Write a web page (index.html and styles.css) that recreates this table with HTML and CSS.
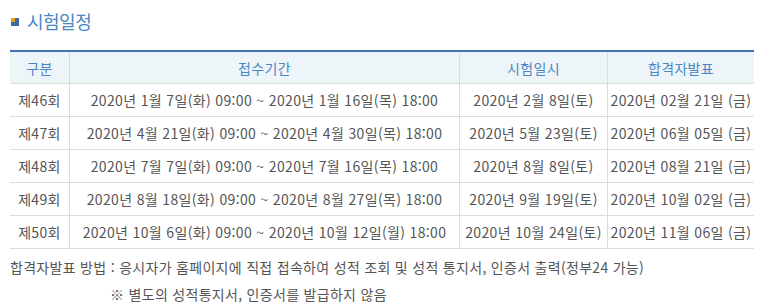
FILE: index.html
```html
<!DOCTYPE html>
<html lang="ko">
<head>
<meta charset="utf-8">
<link rel="stylesheet" href="styles.css">
</head>
<body>
<div class="wrap">
  <h2 class="title"><span class="bullet"><span class="corner"></span></span>시험일정</h2>
  <table class="sched">
    <thead>
      <tr><th class="c1">구분</th><th class="c2">접수기간</th><th class="c3">시험일시</th><th class="c4">합격자발표</th></tr>
    </thead>
    <tbody>
      <tr><td>제46회</td><td>2020년 1월 7일(화) 09:00 ~ 2020년 1월 16일(목) 18:00</td><td>2020년 2월 8일(토)</td><td>2020년 02월 21일 (금)</td></tr>
      <tr><td>제47회</td><td>2020년 4월 21일(화) 09:00 ~ 2020년 4월 30일(목) 18:00</td><td>2020년 5월 23일(토)</td><td>2020년 06월 05일 (금)</td></tr>
      <tr><td>제48회</td><td>2020년 7월 7일(화) 09:00 ~ 2020년 7월 16일(목) 18:00</td><td>2020년 8월 8일(토)</td><td>2020년 08월 21일 (금)</td></tr>
      <tr><td>제49회</td><td>2020년 8월 18일(화) 09:00 ~ 2020년 8월 27일(목) 18:00</td><td>2020년 9월 19일(토)</td><td>2020년 10월 02일 (금)</td></tr>
      <tr><td>제50회</td><td>2020년 10월 6일(화) 09:00 ~ 2020년 10월 12일(월) 18:00</td><td>2020년 10월 24일(토)</td><td>2020년 11월 06일 (금)</td></tr>
    </tbody>
  </table>
  <p class="note">합격자발표 방법 : 응시자가 홈페이지에 직접 접속하여 성적 조회 및 성적 통지서, 인증서 출력(정부24 가능)</p>
  <p class="note sub">※ 별도의 성적통지서, 인증서를 발급하지 않음</p>
</div>
</body>
</html>
```
FILE: styles.css
```css
html, body { margin: 0; padding: 0; background: #fff; }
body {
  font-family: "Noto Sans CJK KR", "Noto Sans", sans-serif;
  color: #555;
}
.wrap { padding: 8px 15px 0 10px; }
.title {
  margin: 0;
  height: 26px;
  display: flex;
  align-items: center;
  font-size: 18px;
  font-weight: normal;
  color: #4a86c5;
  letter-spacing: -0.5px;
}
.bullet {
  width: 8px; height: 8px;
  background: #3e6a9e;
  margin: 1px 8px 0 1px;
  position: relative;
}
.corner {
  position: absolute; left: 0; top: 0;
  width: 4px; height: 4px;
  background: #e0a216;
}
.sched {
  margin-top: 16px;
  width: 744px;
  border-collapse: collapse;
  border-top: 2px solid #4173b0;
  font-size: 14px;
  table-layout: fixed;
}
.sched th, .sched td {
  border: 1px solid #dcdcdc;
  height: 32px;
  padding: 0;
  text-align: center;
  white-space: nowrap;
  letter-spacing: 0.35px;
}
.sched tr > *:first-child { border-left: none; }
.sched tr > *:last-child { border-right: none; }
.sched th {
  background: #eef5f9;
  color: #4a86c5;
  font-weight: normal;
  border-top: none;
  height: 31px;
}
.c1 { width: 59px; }
.c2 { width: 389px; }
.c3 { width: 147px; }
.c4 { width: auto; }
.note {
  margin: 8px 0 0 0;
  font-size: 14px;
  line-height: 20px;
  letter-spacing: 0.3px;
}
.sub { margin-top: 7px; padding-left: 100px; }
```
